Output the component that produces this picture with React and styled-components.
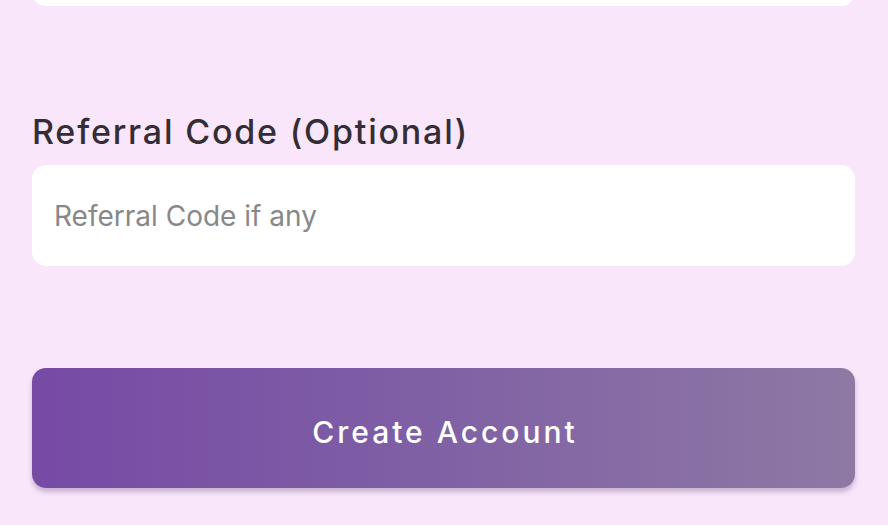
import styled, { createGlobalStyle } from "styled-components";

const GlobalStyle = createGlobalStyle`
  html, body {
    margin: 0;
    padding: 0;
    background: #f9e6fb;
    overflow: hidden;
  }
`;

const Page = styled.div`
  width: 888px;
  height: 525px;
  background: #f9e6fb;
  font-family: "Inter", "Noto Sans", sans-serif;
  padding: 0 33px 0 32px;
  box-sizing: border-box;
  display: flex;
  flex-direction: column;
`;

const Field = styled.div`
  display: flex;
  flex-direction: column;
  margin-top: ${(p) => p.$offset || 0}px;
`;

const Label = styled.div`
  font-size: 34px;
  font-weight: 500;
  color: #332d36;
  letter-spacing: 1.8px;
  line-height: 40px;
  margin: 0 0 13px 0;
`;

const Input = styled.input`
  height: 101px;
  border: none;
  outline: none;
  border-radius: 14px;
  background: #ffffff;
  padding: 0 22px;
  font-family: "Inter", "Noto Sans", sans-serif;
  font-size: 28px;
  color: #333;
  box-sizing: border-box;
  width: 100%;

  &::placeholder {
    color: #888888;
  }
`;

const Button = styled.button`
  margin-top: 102px;
  height: 120px;
  padding: 7px 0 0 3px;
  border: none;
  border-radius: 14px;
  background: linear-gradient(90deg, #764aa5 0%, #7e5ca5 40%, #8e79a4 100%);
  box-shadow: 0 4px 5px rgba(90, 60, 110, 0.3);
  color: #fff;
  font-family: "Inter", "Noto Sans", sans-serif;
  font-size: 30px;
  font-weight: 500;
  letter-spacing: 3px;
  cursor: pointer;
`;

const App = () => {
  return (
    <>
      <GlobalStyle />
      <Page>
        <Field $offset={-95}>
          <Input placeholder="" />
        </Field>
        <Field $offset={106}>
          <Label>Referral Code (Optional)</Label>
          <Input placeholder="Referral Code if any" />
        </Field>
        <Button>Create Account</Button>
      </Page>
    </>
  );
};

export default App;
